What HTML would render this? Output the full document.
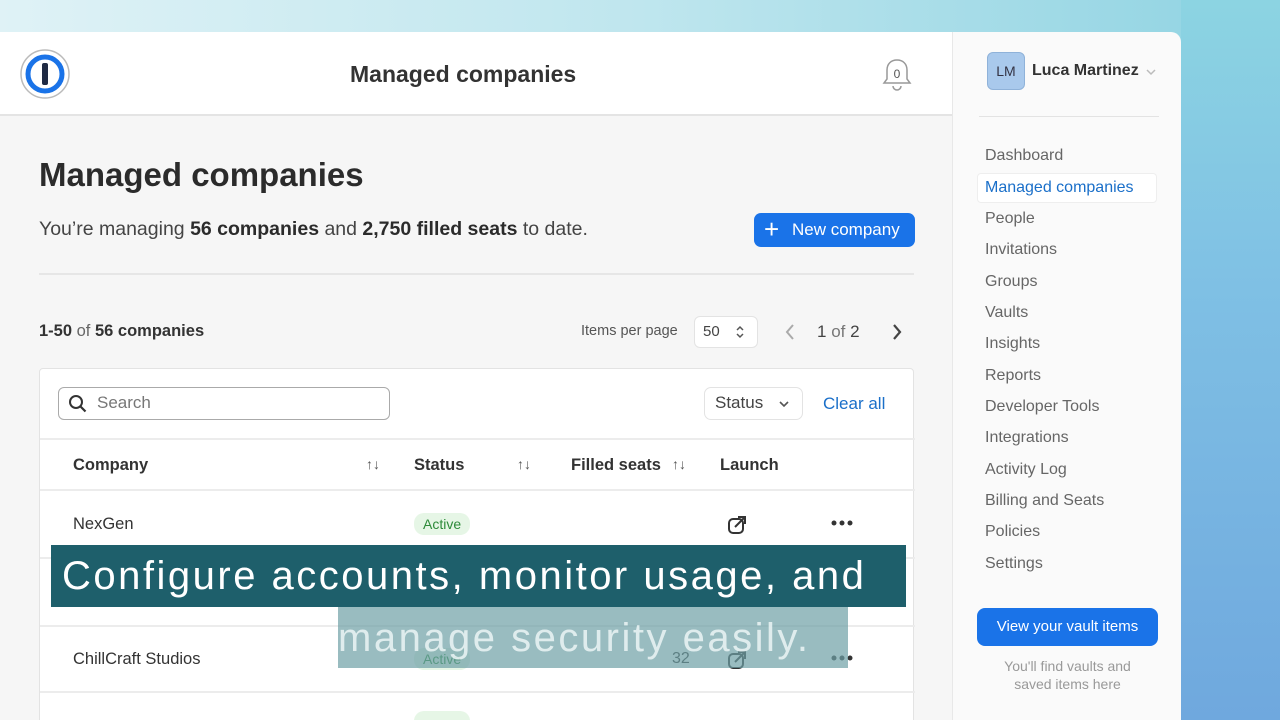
<!DOCTYPE html>
<html><head><meta charset="utf-8"><style>
*{box-sizing:border-box;margin:0;padding:0}
html,body{width:1280px;height:720px;overflow:hidden}
body{position:relative;font-family:"Liberation Sans",sans-serif;background:linear-gradient(90deg,#dff2f6 0%,#bfe6ee 50%,#8fd3e2 100%)}
.bgr{position:absolute;left:1181px;top:0;width:99px;height:720px;background:linear-gradient(180deg,#8cd4e2 0%,#7fc0e4 40%,#6fa8de 100%)}
.main{position:absolute;left:0;top:32px;width:952px;height:688px;background:#f6f6f6;overflow:hidden}
.hdr{position:absolute;left:0;top:0;width:952px;height:84px;background:#fff;border-bottom:2px solid #e4e4e4}
.side{position:absolute;left:952px;top:32px;width:229px;height:688px;background:#fafafa;border-top-right-radius:10px;border-left:1px solid #e8e8e8}
.t{position:absolute;white-space:nowrap}
.nav{position:absolute;left:985px;font-size:16px;color:#666}
.card{position:absolute;left:39px;top:336px;width:875px;height:360px;background:#fff;border:1px solid #e3e3e3;border-radius:4px}
.hl{position:absolute;left:0;width:875px;height:2px;background:#ececec}
.badge{position:absolute;background:#e6f6e6;color:#2e8b3a;font-size:14px;padding:3px 9px;border-radius:10px}
</style></head><body>
<div class="bgr"></div>
<div class="main">
 <div class="hdr">
  <svg style="position:absolute;left:19px;top:16px" width="52" height="52" viewBox="0 0 52 52"><circle cx="26" cy="26" r="24" fill="#fff" stroke="#bbb" stroke-width="1.5"/><circle cx="26" cy="26" r="17" fill="none" stroke="#1a73e8" stroke-width="5"/><circle cx="26" cy="26" r="12" fill="#fff"/><rect x="23" y="15" width="6" height="22" rx="2" fill="#1f2a44"/></svg>
  <div class="t" style="left:350px;top:29px;font-size:23px;font-weight:bold;color:#333">Managed companies</div>
  <svg style="position:absolute;left:882px;top:25px" width="30" height="36" viewBox="0 0 30 36"><path d="M15 3c-6 0-10 4-10 10v9l-3 4h26l-3-4v-9c0-6-4-10-10-10z" fill="none" stroke="#999" stroke-width="1.5"/><path d="M11 29a4 4 0 0 0 8 0" fill="none" stroke="#999" stroke-width="1.5"/><text x="15" y="21" font-size="12" text-anchor="middle" fill="#555" font-family="Liberation Sans">0</text></svg>
 </div>
 <div class="t" style="left:39px;top:124px;font-size:33px;font-weight:bold;color:#2b2b2b">Managed companies</div>
 <div class="t" style="left:39px;top:186px;font-size:19.5px;color:#444">You’re managing <b style="color:#2b2b2b">56 companies</b> and <b style="color:#2b2b2b">2,750 filled seats</b> to date.</div>
 <div class="t" style="left:754px;top:181px;width:161px;height:34px;background:#1a73e8;border-radius:7px;color:#fff;font-size:17px;line-height:34px;padding-left:38px">New company<span style="position:absolute;left:10px;top:-1px;font-size:26px">+</span></div>
 <div style="position:absolute;left:39px;top:241px;width:875px;height:2px;background:#e6e6e6"></div>
 <div class="t" style="left:39px;top:290px;font-size:16.5px;color:#333"><b>1-50</b> <span style="color:#666">of</span> <b>56 companies</b></div>
 <div class="t" style="left:581px;top:291px;font-size:14.5px;color:#555">Items per page</div>
 <div class="t" style="left:694px;top:284px;width:64px;height:32px;border:1.5px solid #e3e3e3;border-radius:6px;background:#fff;font-size:15px;color:#444;line-height:29px;padding-left:8px">50<svg style="position:absolute;left:40px;top:8px" width="10" height="14" viewBox="0 0 10 14"><path d="M2 5l3-3 3 3M2 9l3 3 3-3" fill="none" stroke="#555" stroke-width="1.5"/></svg></div>
 <svg style="position:absolute;left:784px;top:291px" width="12" height="18" viewBox="0 0 12 18"><path d="M9 2L3 9l6 7" fill="none" stroke="#aaa" stroke-width="2"/></svg>
 <div class="t" style="left:817px;top:290px;font-size:17px;color:#444">1 <span style="color:#777">of</span> 2</div>
 <svg style="position:absolute;left:891px;top:291px" width="12" height="18" viewBox="0 0 12 18"><path d="M3 2l6 7-6 7" fill="none" stroke="#444" stroke-width="2.2"/></svg>
 <div class="card">
 <div class="t" style="left:18px;top:18px;width:332px;height:33px;border:1.5px solid #aaa;border-radius:6px;font-size:17px;color:#777;line-height:30px;padding-left:38px">Search
  <svg style="position:absolute;left:9px;top:6px" width="20" height="20" viewBox="0 0 20 20"><circle cx="8" cy="8" r="6" fill="none" stroke="#333" stroke-width="2"/><path d="M12.5 12.5l5 5" stroke="#333" stroke-width="2.2"/></svg></div>
 <div class="t" style="left:664px;top:18px;width:99px;height:33px;border:1.5px solid #e3e3e3;border-radius:7px;font-size:17px;color:#444;line-height:30px;padding-left:10px">Status <svg style="position:absolute;left:73px;top:12px" width="12" height="8" viewBox="0 0 12 8"><path d="M2 2l4 4 4-4" fill="none" stroke="#555" stroke-width="1.6"/></svg></div>
 <div class="t" style="left:783px;top:25px;font-size:17px;color:#1a6fc9">Clear all</div>
 <div class="hl" style="top:69px"></div>
 <div class="t" style="left:33px;top:87px;font-size:16.5px;font-weight:bold;color:#333">Company</div>
 <div class="t" style="left:326px;top:87px;font-size:14px;color:#555">↑↓</div>
 <div class="t" style="left:374px;top:87px;font-size:16.5px;font-weight:bold;color:#333">Status</div>
 <div class="t" style="left:477px;top:87px;font-size:14px;color:#555">↑↓</div>
 <div class="t" style="left:531px;top:87px;font-size:16.5px;font-weight:bold;color:#333">Filled seats</div>
 <div class="t" style="left:632px;top:87px;font-size:14px;color:#555">↑↓</div>
 <div class="t" style="left:680px;top:87px;font-size:16.5px;font-weight:bold;color:#333">Launch</div>
 <div class="hl" style="top:120px"></div>
 <div class="t" style="left:33px;top:146px;font-size:16.5px;color:#333">NexGen</div>
 <div class="badge" style="left:374px;top:144px">Active</div>
 <svg style="position:absolute;left:686px;top:145px" width="22" height="22" viewBox="0 0 22 22"><rect x="3" y="5" width="14" height="14" rx="4" fill="none" stroke="#333" stroke-width="2"/><path d="M9 13l9-9M12 3h7v7" fill="none" stroke="#333" stroke-width="2"/></svg>
 <svg style="position:absolute;left:791px;top:151px" width="22" height="6" viewBox="0 0 22 6"><circle cx="3" cy="3" r="2.5" fill="#333"/><circle cx="11" cy="3" r="2.5" fill="#333"/><circle cx="19" cy="3" r="2.5" fill="#333"/></svg>
 <div class="hl" style="top:188px"></div>
 <div class="hl" style="top:256px"></div>
 <div class="t" style="left:33px;top:281px;font-size:16.5px;color:#333">ChillCraft Studios</div>
 <div class="badge" style="left:374px;top:279px">Active</div>
 <div class="t" style="left:632px;top:281px;font-size:16px;color:#333">32</div>
 <svg style="position:absolute;left:686px;top:280px" width="22" height="22" viewBox="0 0 22 22"><rect x="3" y="5" width="14" height="14" rx="4" fill="none" stroke="#333" stroke-width="2"/><path d="M9 13l9-9M12 3h7v7" fill="none" stroke="#333" stroke-width="2"/></svg>
 <svg style="position:absolute;left:791px;top:286px" width="22" height="6" viewBox="0 0 22 6"><circle cx="3" cy="3" r="2.5" fill="#333"/><circle cx="11" cy="3" r="2.5" fill="#333"/><circle cx="19" cy="3" r="2.5" fill="#333"/></svg>
 <div class="hl" style="top:322px"></div>
 <div class="badge" style="left:374px;top:342px;color:#e6f6e6">Active</div>
 </div>
</div>
<div class="side">
 <div class="t" style="left:34px;top:20px;width:38px;height:38px;background:#a9c9ec;border:1px solid #8fb2d9;border-radius:6px;font-size:14px;color:#334;text-align:center;line-height:36px">LM</div>
 <div class="t" style="left:79px;top:30px;font-size:16px;font-weight:bold;color:#333">Luca Martinez</div>
 <svg style="position:absolute;left:192px;top:36px" width="12" height="8" viewBox="0 0 12 8"><path d="M2 2l4 4 4-4" fill="none" stroke="#bbb" stroke-width="1.5"/></svg>
 <div style="position:absolute;left:26px;top:84px;width:180px;height:1px;background:#e3e3e3"></div>
 <div style="position:absolute;left:24px;top:141px;width:180px;height:30px;background:#fff;border:1px solid #eee;border-radius:4px"></div>
 <div class="t" style="left:24px;top:576px;width:181px;height:38px;background:#1a73e8;border-radius:8px;color:#fff;font-size:15px;text-align:center;line-height:38px">View your vault items</div>
 <div class="t" style="left:24px;top:625px;width:181px;text-align:center;font-size:14px;color:#999;line-height:18px">You'll find vaults and<br>saved items here</div>
</div>
<div class="nav" style="top:147px">Dashboard</div>
<div class="nav" style="top:179px;color:#1a6fc9">Managed companies</div>
<div class="nav" style="top:210px">People</div>
<div class="nav" style="top:241px">Invitations</div>
<div class="nav" style="top:273px">Groups</div>
<div class="nav" style="top:304px">Vaults</div>
<div class="nav" style="top:335px">Insights</div>
<div class="nav" style="top:367px">Reports</div>
<div class="nav" style="top:398px">Developer Tools</div>
<div class="nav" style="top:429px">Integrations</div>
<div class="nav" style="top:461px">Activity Log</div>
<div class="nav" style="top:492px">Billing and Seats</div>
<div class="nav" style="top:523px">Policies</div>
<div class="nav" style="top:555px">Settings</div>
<div class="t" style="left:51px;top:545px;width:855px;height:62px;background:#1e5f6b;color:#fff;font-size:40px;line-height:62px;padding-left:11px;letter-spacing:2.5px">Configure accounts, monitor usage, and</div>
<div class="t" style="left:338px;top:607px;width:510px;height:61px;background:rgba(110,160,165,0.7);color:rgba(235,245,245,0.85);font-size:40px;line-height:62px;letter-spacing:2.5px">manage security easily.</div>
</body></html>
